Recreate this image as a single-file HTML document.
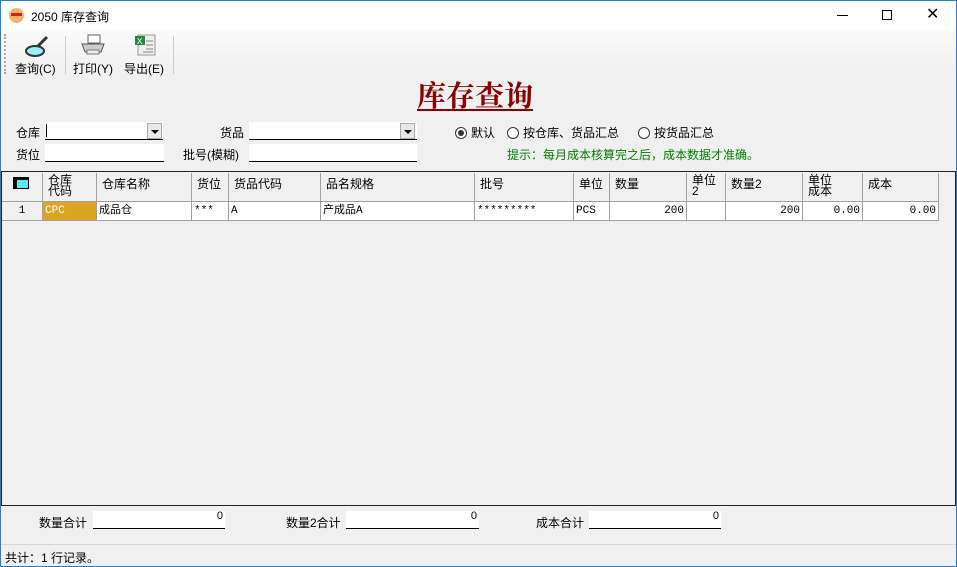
<!DOCTYPE html>
<html><head><meta charset="utf-8"><style>
*{margin:0;padding:0;box-sizing:border-box}
body{width:957px;height:567px;position:relative;background:#f0f0f0;font-family:"Liberation Sans","Noto Sans CJK SC",sans-serif;font-size:12px;color:#000;overflow:hidden}
.a{position:absolute}
.win{left:0;top:0;width:957px;height:567px;border:1px solid #1883d7}
.title{left:1px;top:1px;width:955px;height:29px;background:#fff}
.tb{left:1px;top:30px;width:955px;height:47px;background:linear-gradient(#fafafa,#f0f0f0)}
.in{background:#fff;border-bottom:1px solid #000;height:18px}
.dd{width:15px;height:16px;background:#e8e8e8;border:1px solid #aaa;top:1px}
.dd:after{content:"";position:absolute;left:3px;top:6px;border:4px solid transparent;border-top:4px solid #000;border-bottom:0}
.grid{left:1px;top:171px;width:955px;height:335px;border:1px solid #222;background:#f0f0f0}
.c{position:absolute;border-right:1px solid #a0a0a0;border-bottom:1px solid #a0a0a0;font-family:"Liberation Sans","WenQuanYi Zen Hei",sans-serif;font-size:12px;line-height:12px;overflow:hidden;white-space:nowrap}
.h{top:1px;height:29px;background:#f0f0f0;padding:5px 0 0 5px}
.h2{padding-top:2px;line-height:11px}
.r{top:30px;height:19px;background:#fff;padding:3px 2px;font-family:"Liberation Mono","WenQuanYi Zen Hei",monospace;font-size:11px}
.rt{text-align:right}
.rb{width:12px;height:12px;border:1px solid #333;border-radius:50%;background:#fff;display:inline-block;vertical-align:-2px;margin-right:4px;position:relative}
</style></head><body>
<div class="a win"></div>
<div class="a title"></div>
<div class="a" style="left:9px;top:8px;width:15px;height:15px;border-radius:50%;background:#f3b36b"><div class="a" style="left:2px;top:5px;width:11px;height:3px;background:#d02020"></div></div>
<div class="a" style="left:31px;top:8px;font-size:12px">2050 库存查询</div>
<div class="a" style="left:837px;top:15px;width:11px;height:1px;background:#000"></div>
<div class="a" style="left:882px;top:10px;width:10px;height:10px;border:1px solid #000"></div>
<div class="a" style="left:926px;top:9px;font-size:16px;line-height:12px">✕</div>
<div class="a tb"></div>
<div class="a" style="left:4px;top:34px;height:40px;border-left:2px dotted #aaa"></div>
<div class="a" style="left:65px;top:36px;width:1px;height:38px;background:#ccc"></div>
<div class="a" style="left:173px;top:36px;width:1px;height:38px;background:#ccc"></div>
<svg class="a" style="left:24px;top:34px" width="26" height="24"><line x1="14" y1="12" x2="23" y2="3" stroke="#333" stroke-width="3"/><ellipse cx="11" cy="17" rx="9" ry="5" fill="#9ef" stroke="#333" stroke-width="2"/></svg>
<svg class="a" style="left:80px;top:33px" width="26" height="24"><rect x="8" y="2" width="12" height="8" fill="#fff" stroke="#666"/><path d="M2 11h22l-3 8H5z" fill="#ccc" stroke="#555"/><rect x="7" y="17" width="12" height="4" fill="#eee" stroke="#777"/></svg>
<svg class="a" style="left:133px;top:33px" width="24" height="24"><rect x="5" y="2" width="17" height="20" fill="#eee" stroke="#999"/><rect x="2" y="3" width="10" height="9" fill="#2a8a3a"/><text x="4" y="11" font-size="8" fill="#fff" font-family="Liberation Sans">X</text><path d="M13 8h7M13 12h7M13 16h7M10 19h10" stroke="#888"/></svg>
<div class="a" style="left:15px;top:60px">查询(C)</div>
<div class="a" style="left:73px;top:60px">打印(Y)</div>
<div class="a" style="left:124px;top:60px">导出(E)</div>
<div class="a" style="left:417px;top:78px;font-family:'Noto Serif CJK SC',serif;font-weight:bold;font-size:29px;line-height:34px;color:#8b0000;text-decoration:underline;text-decoration-thickness:2px;text-underline-offset:3px">库存查询</div>
<div class="a" style="left:16px;top:124px">仓库</div>
<div class="a in" style="left:45px;top:122px;width:118px"><div class="a" style="left:1px;top:2px;width:1px;height:13px;background:#000"></div><div class="a dd" style="left:102px"></div></div>
<div class="a" style="left:220px;top:124px">货品</div>
<div class="a in" style="left:249px;top:122px;width:168px"><div class="a dd" style="left:151px"></div></div>
<div class="a" style="left:16px;top:146px">货位</div>
<div class="a in" style="left:45px;top:144px;width:119px"></div>
<div class="a" style="left:183px;top:146px">批号(模糊)</div>
<div class="a in" style="left:249px;top:144px;width:168px"></div>
<div class="a" style="left:455px;top:124px"><span class="rb"><span class="a" style="left:2px;top:2px;width:6px;height:6px;border-radius:50%;background:#333"></span></span>默认</div>
<div class="a" style="left:507px;top:124px"><span class="rb"></span>按仓库、货品汇总</div>
<div class="a" style="left:638px;top:124px"><span class="rb"></span>按货品汇总</div>
<div class="a" style="left:507px;top:146px;color:#008000">提示：每月成本核算完之后，成本数据才准确。</div>
<div class="a grid">
<div class="c h" style="left:0;width:41px;padding:4px 0 0 11px"><svg width="16" height="12"><rect x="0.5" y="0.5" width="15" height="11" fill="#5ee" stroke="#000"/><rect x="0" y="0" width="16" height="3" fill="#000"/><rect x="0" y="0" width="4" height="12" fill="#000"/></svg></div>
<div class="c h h2" style="left:41px;width:54px">仓库<br>代码</div>
<div class="c h" style="left:95px;width:95px">仓库名称</div>
<div class="c h" style="left:190px;width:37px">货位</div>
<div class="c h" style="left:227px;width:92px">货品代码</div>
<div class="c h" style="left:319px;width:154px">品名规格</div>
<div class="c h" style="left:473px;width:99px">批号</div>
<div class="c h" style="left:572px;width:36px">单位</div>
<div class="c h" style="left:608px;width:77px">数量</div>
<div class="c h h2" style="left:685px;width:39px">单位<br>2</div>
<div class="c h" style="left:724px;width:77px">数量2</div>
<div class="c h h2" style="left:801px;width:60px">单位<br>成本</div>
<div class="c h" style="left:861px;width:76px">成本</div>
<div class="c r" style="left:0;width:41px;background:#f0f0f0;text-align:center">1</div>
<div class="c r" style="left:41px;width:54px;background:#daa520;color:#fff">CPC</div>
<div class="c r" style="left:95px;width:95px">成品仓</div>
<div class="c r" style="left:190px;width:37px">***</div>
<div class="c r" style="left:227px;width:92px">A</div>
<div class="c r" style="left:319px;width:154px">产成品A</div>
<div class="c r" style="left:473px;width:99px">*********</div>
<div class="c r" style="left:572px;width:36px">PCS</div>
<div class="c r rt" style="left:608px;width:77px">200</div>
<div class="c r" style="left:685px;width:39px"></div>
<div class="c r rt" style="left:724px;width:77px">200</div>
<div class="c r rt" style="left:801px;width:60px">0.00</div>
<div class="c r rt" style="left:861px;width:76px">0.00</div>
</div>
<div class="a" style="left:39px;top:514px">数量合计</div>
<div class="a in" style="left:93px;top:511px;width:132px;text-align:right;font-size:11px;line-height:11px;padding-right:2px">0</div>
<div class="a" style="left:286px;top:514px">数量2合计</div>
<div class="a in" style="left:346px;top:511px;width:133px;text-align:right;font-size:11px;line-height:11px;padding-right:2px">0</div>
<div class="a" style="left:536px;top:514px">成本合计</div>
<div class="a in" style="left:589px;top:511px;width:132px;text-align:right;font-size:11px;line-height:11px;padding-right:2px">0</div>
<div class="a" style="left:1px;top:544px;width:955px;height:1px;background:#d8d8d8"></div>
<div class="a" style="left:5px;top:549px">共计：1 行记录。</div>
</body></html>
